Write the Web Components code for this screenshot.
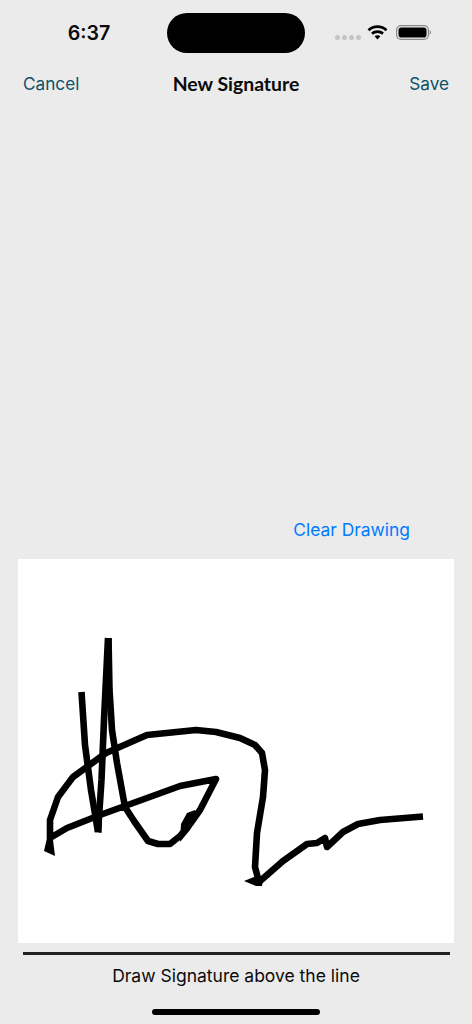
<!DOCTYPE html>
<html>
<head>
<meta charset="utf-8">
<title>New Signature</title>
<style>
  html, body { margin: 0; padding: 0; background: #ebebeb; }
  body { width: 472px; height: 1024px; overflow: hidden; font-family: Inter, "Liberation Sans", sans-serif; }
  sig-screen { height: 1024px; }
</style>
</head>
<body>
<sig-screen>
  <status-bar slot="status" time="6:37"></status-bar>
  <nav-bar slot="nav" title="New Signature">
    <span slot="left">Cancel</span>
    <span slot="right">Save</span>
  </nav-bar>
  <clear-row slot="clear">Clear Drawing</clear-row>
  <signature-pad slot="pad"></signature-pad>
  <sign-line slot="line">Draw Signature above the line</sign-line>
  <home-indicator slot="home"></home-indicator>
</sig-screen>

<script>
class SigScreen extends HTMLElement {
  constructor() {
    super();
    this.attachShadow({ mode: "open" });
    this.shadowRoot.innerHTML = `
      <style>
        :host { display: flex; flex-direction: column; background: #ebebeb; }
        #spacer { flex: 1; }
      </style>
      <slot name="status"></slot>
      <slot name="nav"></slot>
      <div id="spacer"></div>
      <slot name="clear"></slot>
      <slot name="pad"></slot>
      <slot name="line"></slot>
      <slot name="home"></slot>
    `;
  }
}

class StatusBar extends HTMLElement {
  constructor() {
    super();
    this.attachShadow({ mode: "open" });
    this.shadowRoot.innerHTML = `
      <style>
        :host { display: grid; grid-template-columns: 167px 138px 1fr; padding-top: 13px; box-sizing: border-box; height: 66px; }
        #time { font: 600 19.6px/40px Inter, "Liberation Sans", sans-serif; color: #0a0a0a; text-align: center; padding-left: 11px; }
        #island { height: 40px; background: #000; border-radius: 20px; }
        #icons { display: flex; align-items: flex-start; padding: 11px 0 0 30px; }
        #dots { display: flex; gap: 2px; margin-top: 11px; }
        #dots i { width: 5px; height: 5px; border-radius: 50%; background: #c4c4c4; }
        #wifi { margin-left: 6px; }
        #batt { margin-left: 8px; margin-top: 1px; }
      </style>
      <div id="time"></div>
      <div id="island"></div>
      <div id="icons">
        <div id="dots"><i></i><i></i><i></i><i></i></div>
        <svg id="wifi" width="21" height="16" viewBox="0 0 21 16">
          <path d="M1.5 6.2C6.6 1.4 14.4 1.4 19.5 6.2" fill="none" stroke="#000" stroke-width="2.8"/>
          <path d="M5 9.6C8 7 13 7 16 9.6" fill="none" stroke="#000" stroke-width="2.8"/>
          <path d="M7.6 12.3C9.2 11 11.8 11 13.4 12.3L10.5 15.5Z" fill="#000"/>
        </svg>
        <svg id="batt" width="35" height="15" viewBox="0 0 35 15">
          <rect x="0.6" y="0.6" width="31.8" height="13.8" rx="4.4" fill="none" stroke="#8a8a8a" stroke-width="1.2"/>
          <rect x="2.5" y="2.5" width="28" height="10" rx="2.8" fill="#000"/>
          <path d="M33.6 5.3C34.6 5.7 35 6.5 35 7.5S34.6 9.3 33.6 9.7Z" fill="#8a8a8a"/>
        </svg>
      </div>
    `;
  }
  connectedCallback() {
    this.shadowRoot.querySelector("#time").textContent = this.getAttribute("time");
  }
}

class NavBar extends HTMLElement {
  constructor() {
    super();
    this.attachShadow({ mode: "open" });
    this.shadowRoot.innerHTML = `
      <style>
        :host { display: grid; grid-template-columns: 1fr auto 1fr; align-items: center; height: 36px; padding: 0 23px; font: 400 17.2px/36px Inter, "Liberation Sans", sans-serif; color: #0d5169; }
        #title { font: 700 19.4px/36px Lato, "Liberation Sans", sans-serif; color: #0a0a0a; }
        #right { text-align: right; }
      </style>
      <div><slot name="left"></slot></div>
      <div id="title"></div>
      <div id="right"><slot name="right"></slot></div>
    `;
  }
  connectedCallback() {
    this.shadowRoot.querySelector("#title").textContent = this.getAttribute("title");
  }
}

class ClearRow extends HTMLElement {
  constructor() {
    super();
    this.attachShadow({ mode: "open" });
    this.shadowRoot.innerHTML = `
      <style>
        :host { display: block; height: 44px; padding: 0 62px 0 0; text-align: right; font: 400 17.4px/30px Inter, "Liberation Sans", sans-serif; color: #007aff; }
      </style>
      <slot></slot>
    `;
  }
}

class SignaturePad extends HTMLElement {
  constructor() {
    super();
    this.attachShadow({ mode: "open" });
    // viewBox is in screen coordinates so the strokes read off the reference directly
    this.shadowRoot.innerHTML = `
      <style>
        :host { display: block; height: 384px; margin: 0 18px; background: #fff; }
        svg { display: block; }
        path { fill: none; stroke: #000; stroke-width: 6.6; stroke-linejoin: round; stroke-linecap: butt; }
        .blob { fill: #000; stroke: none; }
      </style>
      <svg width="436" height="384" viewBox="18 559 436 384">
        <path d="M81.5 692L85 745L91 790L98 832"/>
        <path d="M98 832L101.5 780L104 720L108 638"/>
        <path d="M108.5 638L109.5 690L112 730L117 763L125 807L134 821L148 841L158 844L170 844L180 836L190 824L200 810L216 779L180 786L147 798L100 815L67 828L50 838L50 820L58 797L73 777L106 753L147 735L196 730L216 732L240 738L255 745L262 753L265 770L263 797L257 833L255 867L259 882L283 861L307 844L317 843L325 838L327 847L343 832L358 824L380 820L423 816.5"/>
        <path class="blob" d="M105 638H111.5V670H105Z"/>
        <path class="blob" d="M95 832L96 810H102L101.5 833Z"/>
        <path class="blob" d="M44 851L47 838L53 840L55 856Z"/>
        <path class="blob" d="M180 842L181 824L187 813L195 810L197 818L190 830Z"/>
        <path class="blob" d="M244 881L254 877L263 879L262 886L256 886Z"/>
      </svg>
    `;
  }
}

class SignLine extends HTMLElement {
  constructor() {
    super();
    this.attachShadow({ mode: "open" });
    this.shadowRoot.innerHTML = `
      <style>
        :host { display: block; padding-top: 9px; font: 400 17.5px/41px Inter, "Liberation Sans", sans-serif; color: #0a0a0a; text-align: center; }
        #rule { height: 3px; margin: 0 22px 0 23px; background: #222; }
      </style>
      <div id="rule"></div>
      <slot></slot>
    `;
  }
}

class HomeIndicator extends HTMLElement {
  constructor() {
    super();
    this.attachShadow({ mode: "open" });
    this.shadowRoot.innerHTML = `
      <style>
        :host { display: block; height: 28px; padding-top: 13px; box-sizing: border-box; }
        div { width: 168px; height: 6px; margin: 0 auto; border-radius: 3px; background: #000; }
      </style>
      <div></div>
    `;
  }
}

customElements.define("sig-screen", SigScreen);
customElements.define("status-bar", StatusBar);
customElements.define("nav-bar", NavBar);
customElements.define("clear-row", ClearRow);
customElements.define("signature-pad", SignaturePad);
customElements.define("sign-line", SignLine);
customElements.define("home-indicator", HomeIndicator);
</script>
</body>
</html>
